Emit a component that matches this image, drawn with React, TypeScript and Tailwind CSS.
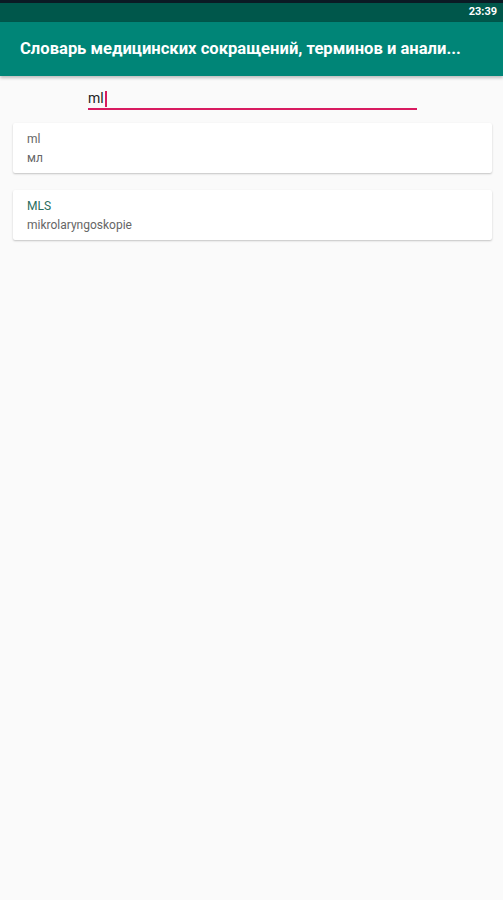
import React from 'react';

const items = [
	{ term: 'ml', desc: 'мл', teal: false },
	{ term: 'MLS', desc: 'mikrolaryngoskopie', teal: true }
];

const App = () => {
	return (
		<div className="w-[503px] h-[900px] bg-[#fafafa] flex flex-col" style={{ fontFamily: 'Roboto, "Noto Sans", sans-serif' }}>
			{/* status bar */}
			<div className="h-[22px] bg-[#00574b] border-t-[3px] border-[#0b1a24] flex items-center justify-end pr-[6px]">
				<span className="text-white text-[11px] font-bold">23:39</span>
			</div>

			{/* toolbar */}
			<div className="h-[54px] bg-[#008577] flex items-center pl-[20px] shadow-[0_2px_3px_rgba(0,0,0,0.25)] relative z-10">
				<h1 className="text-white text-[16.6px] font-bold whitespace-nowrap">
					Словарь медицинских сокращений, терминов и анали...
				</h1>
			</div>

			{/* search */}
			<div className="pl-[88px] pt-[13px]">
				<div className="w-[329px] border-b-[2px] border-[#d81b60] h-[21px] flex items-center">
					<span className="text-[14px] text-[#222]">ml</span>
					<span className="w-[2px] h-[16px] bg-[#d81b60] ml-[1px]" />
				</div>
			</div>

			{/* results */}
			<div className="flex flex-col gap-[17px] px-[13px] mt-[13px]">
				{items.map((item, index) => (
					<div
						key={index}
						className="h-[50px] w-[479px] bg-white rounded-[2px] shadow-[0_1px_2px_rgba(0,0,0,0.22)] flex flex-col justify-center pl-[14px] gap-[5px]"
					>
						<p className={`text-[12px] leading-[14px] ${item.teal ? 'text-[#2a6e60]' : 'text-[#666]'}`}>{item.term}</p>
						<p className="text-[12px] leading-[14px] text-[#666]">{item.desc}</p>
					</div>
				))}
			</div>
		</div>
	);
};

export default App;
